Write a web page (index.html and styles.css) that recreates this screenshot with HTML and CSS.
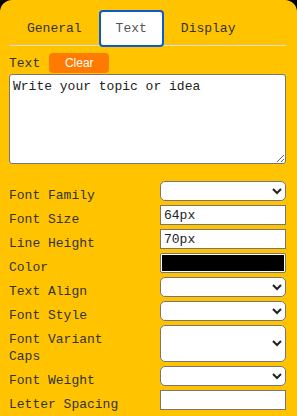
FILE: index.html
```html
<!DOCTYPE html>
<html>
<head>
    <meta charset="UTF-8">
    <title>Text settings</title>
    <link rel="stylesheet" href="styles.css">
</head>
<body>
    <div class="panel">
        <!-- Tabs -->
        <div class="tabs">
            <div class="tab">General</div>
            <div class="tab tab-active">Text</div>
            <div class="tab">Display</div>
        </div>

        <div class="text-head">
            <span class="etiqueta">Text</span>
            <button class="boton-clear">Clear</button>
        </div>
        <textarea class="texto">Write your topic or idea</textarea>

        <!-- Font options -->
        <div class="opciones">
            <label class="etiqueta">Font Family</label>
            <select class="control"><option></option></select>

            <label class="etiqueta">Font Size</label>
            <input class="control" type="text" value="64px">

            <label class="etiqueta">Line Height</label>
            <input class="control" type="text" value="70px">

            <label class="etiqueta">Color</label>
            <input class="control control-color" type="color" value="#000000">

            <label class="etiqueta">Text Align</label>
            <select class="control"><option></option></select>

            <label class="etiqueta">Font Style</label>
            <select class="control"><option></option></select>

            <label class="etiqueta">Font Variant Caps</label>
            <select class="control"><option></option></select>

            <label class="etiqueta">Font Weight</label>
            <select class="control"><option></option></select>

            <label class="etiqueta">Letter Spacing</label>
            <input class="control" type="text" value="">
        </div>
    </div>
</body>
</html>
```

FILE: styles.css
```css
body {
    margin: 0;
    padding: 0;
    background-color: #000;
    font-family: "Liberation Mono", "Courier New", monospace;
    font-size: 13px;
    color: #333;
}

.panel {
    background-color: #ffc300;
    border-radius: 12px 12px 0 0;
    padding: 10px 11px 0 9px;
    height: 416px;
    box-sizing: border-box;
    overflow: hidden;
}

.tabs {
    display: flex;
    padding-left: 1px;
    border-bottom: 1px solid #dcdcdc;
    height: 35px;
}

.tab {
    height: 37px;
    line-height: 33px;
    padding: 0 15px;
    border: 2px solid transparent;
    box-sizing: border-box;
    color: #333;
}

.tab-active {
    background-color: #fff;
    border-color: #0a5bd3;
    border-radius: 4px;
    color: #555;
    position: relative;
}

.text-head {
    display: flex;
    align-items: center;
    gap: 9px;
    margin-top: 7px;
}

.boton-clear {
    width: 60px;
    height: 20px;
    padding: 0;
    border: none;
    border-radius: 4px;
    background-color: #ff7a00;
    color: #fff;
    font-family: "Liberation Sans", Arial, sans-serif;
    font-size: 12px;
}

.texto {
    display: block;
    width: 277px;
    height: 90px;
    margin: 1px 0 0 0;
    padding: 4px 3px;
    box-sizing: border-box;
    border: 1px solid #767676;
    border-radius: 3px;
    font-family: "Liberation Mono", "Courier New", monospace;
    font-size: 13px;
    color: #222;
    background-color: #fff;
    resize: vertical;
}

.opciones {
    display: grid;
    grid-template-columns: 1fr 126px;
    column-gap: 25px;
    row-gap: 4px;
    margin-top: 17px;
}

.opciones .etiqueta {
    line-height: 17px;
    padding-top: 6px;
    margin-bottom: -3px;
}

.control {
    width: 126px;
    min-height: 20px;
    margin: 0;
    box-sizing: border-box;
    border: 1px solid #767676;
    background-color: #fff;
    font-family: "Liberation Mono", "Courier New", monospace;
    font-size: 13px;
    color: #222;
    padding: 0 3px;
    align-self: stretch;
}

select.control {
    border-radius: 5px;
}

.control-color {
    padding: 1px;
    border-radius: 2px;
    height: 20px;
}

.control-color::-webkit-color-swatch-wrapper {
    padding: 0;
}

.control-color::-webkit-color-swatch {
    border: none;
    border-radius: 0;
}
```
